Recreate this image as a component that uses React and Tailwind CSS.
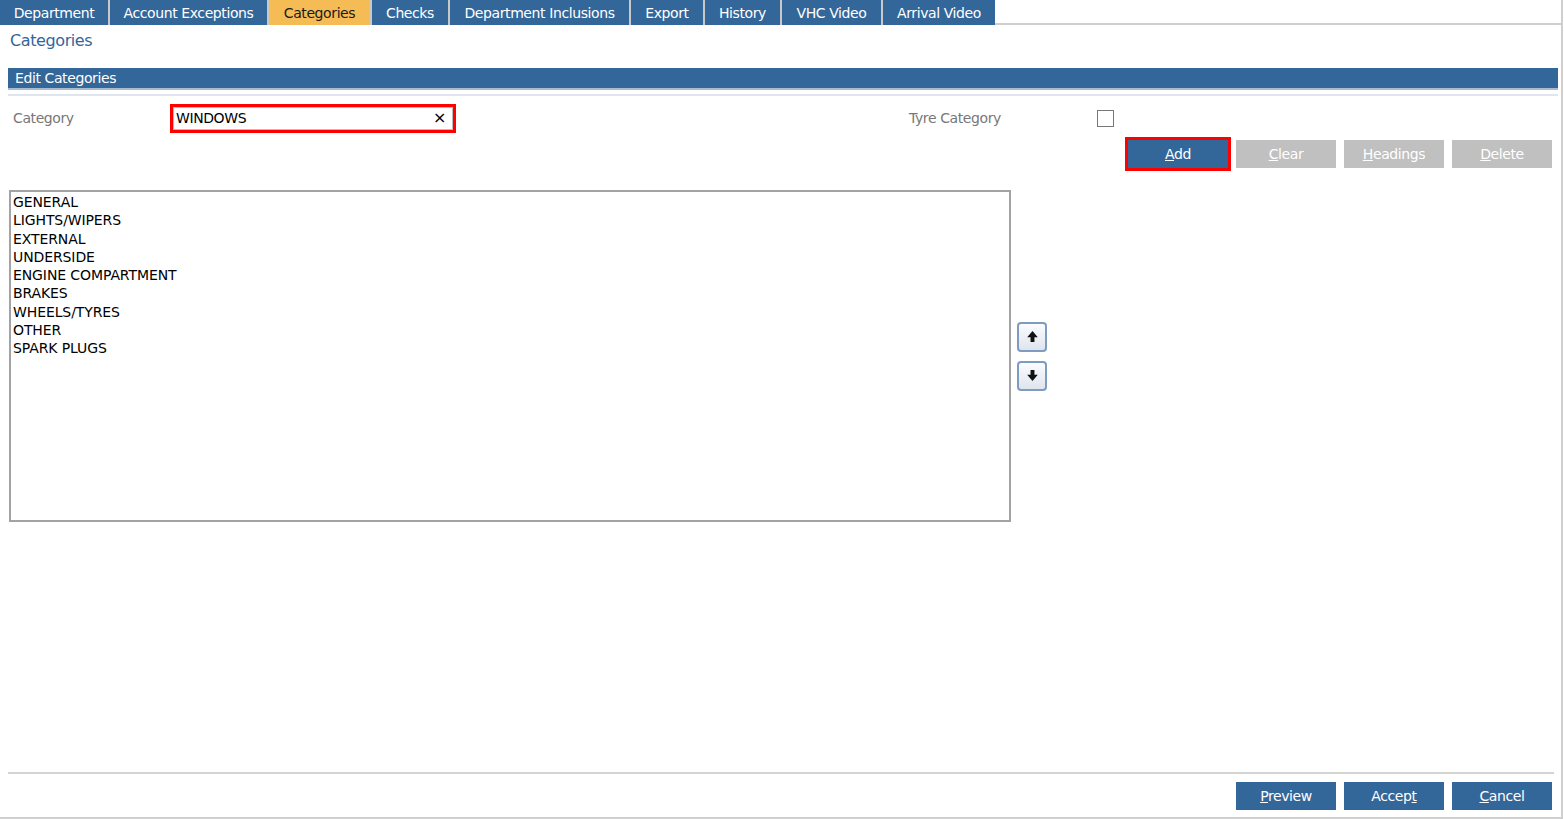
import { useState } from 'react'

const tabs = [
  { label: 'Department', w: 'w-[108px]' },
  { label: 'Account Exceptions', w: 'w-[159px]' },
  { label: 'Categories', w: 'w-[103px]', active: true },
  { label: 'Checks', w: 'w-[78px]' },
  { label: 'Department Inclusions', w: 'w-[181px]' },
  { label: 'Export', w: 'w-[74px]' },
  { label: 'History', w: 'w-[77px]' },
  { label: 'VHC Video', w: 'w-[101px]' },
  { label: 'Arrival Video', w: 'w-[114px]' },
]

const categories = [
  'GENERAL',
  'LIGHTS/WIPERS',
  'EXTERNAL',
  'UNDERSIDE',
  'ENGINE COMPARTMENT',
  'BRAKES',
  'WHEELS/TYRES',
  'OTHER',
  'SPARK PLUGS',
]

function ActionButton({ first, rest, disabled }) {
  return (
    <button
      className={`w-[100px] h-[28px] text-[14px] text-white ${disabled ? 'bg-[#c0c0c0]' : 'bg-[#336699]'}`}
    >
      <span className="underline">{first}</span>
      {rest}
    </button>
  )
}

function ArrowButton({ down }) {
  return (
    <button className="w-[30px] h-[30px] rounded-[4px] border-2 border-[#7d9cc0] bg-gradient-to-b from-[#fbfcfe] to-[#dfe4ee] flex items-center justify-center">
      <svg width="13" height="13" viewBox="0 0 12 12">
        {down ? (
          <path d="M4.2 1h3.6v4.4h3.1L6 11 1.1 5.4h3.1z" fill="#111" />
        ) : (
          <path d="M4.2 11h3.6V6.6h3.1L6 1 1.1 6.6h3.1z" fill="#111" />
        )}
      </svg>
    </button>
  )
}

function App() {
  const [category, setCategory] = useState('WINDOWS')
  const [tyre, setTyre] = useState(false)

  return (
    <div className="w-[1564px] h-[819px] bg-white font-['DejaVu_Sans',sans-serif] text-[14px] tracking-[-0.4px] flex flex-col overflow-hidden">
      {/* Tabs */}
      <div className="flex h-[25px] shrink-0">
        {tabs.map((t, i) => (
          <div
            key={t.label}
            className={`${t.w} h-[25px] pt-[2px] flex items-center justify-center text-[14px] ${i > 0 ? 'border-l-2 border-[#c8c8c8]' : ''} ${t.active ? 'bg-[#f5bb55] text-[#1a1a1a]' : 'bg-[#336699] text-white'}`}
          >
            {t.label}
          </div>
        ))}
        <div className="flex-1 border-b-2 border-r-2 border-[#cfcfcf] mr-[1px]" />
      </div>

      {/* Panel */}
      <div className="flex-1 flex flex-col border-r-2 border-b-2 border-[#cfcfcf] mr-[1px] pl-[8px] pr-[3px]">
        <div className="h-[31px] pt-[4px] pl-[2px] text-[16px] text-[#336699]">Categories</div>

        <div className="mt-[12px] h-[22px] bg-[#336699] border-b-2 border-[#a9bccf] text-white pl-[7px] flex items-center text-[14px]">
          Edit Categories
        </div>
        <div className="mt-[4px] h-[2px] bg-[#dfe6ee]" />

        {/* Form row */}
        <div className="flex items-center h-[30px] mt-[7px]">
          <div className="w-[162px] pl-[5px] text-[#777777]">Category</div>
          <div className="w-[286px] h-[29px] border-[3px] border-[#ff0000] flex items-center">
            <div className="flex-1 h-full border border-[#bdbdbd] flex items-center pl-[2px] pr-[6px]">
              <input
                value={category}
                onChange={(e) => setCategory(e.target.value)}
                className="flex-1 outline-none text-black text-[14px] bg-transparent"
              />
              <span className="text-[16px] text-black leading-none">×</span>
            </div>
          </div>
          <div className="ml-[453px] w-[188px] text-[#777777]">Tyre Category</div>
          <button
            onClick={() => setTyre(!tyre)}
            className="w-[17px] h-[17px] border border-[#777777] bg-white"
          >
            {tyre ? '✓' : ''}
          </button>
        </div>

        <div className="flex justify-end gap-[7px] mt-[4px] pr-[6px]">
          <div className="border-[3px] border-[#ff0000] mr-[-2px]">
            <button className="w-[100px] h-[28px] text-[14px] text-white bg-[#336699]">
              <span className="underline">A</span>dd
            </button>
          </div>
          <div className="flex gap-[8px] pt-[3px]">
            <ActionButton first="C" rest="lear" disabled />
            <ActionButton first="H" rest="eadings" disabled />
            <ActionButton first="D" rest="elete" disabled />
          </div>
        </div>

        {/* List + arrows */}
        <div className="flex items-center mt-[19px]">
          <div className="w-[1002px] h-[332px] ml-[1px] border-2 border-[#a3a3a3] px-[2px] pt-[1px] text-black text-[14px] tracking-[-0.1px] leading-[18.25px]">
            {categories.map((c) => (
              <div key={c}>{c}</div>
            ))}
          </div>
          <div className="ml-[6px] flex flex-col gap-[9px]">
            <ArrowButton />
            <ArrowButton down />
          </div>
        </div>

        <div className="flex-1" />

        {/* Footer */}
        <div className="h-[2px] bg-[#d4d4d4] mr-[4px]" />
        <div className="flex justify-end gap-[8px] pt-[8px] pb-[7px] pr-[6px]">
          <ActionButton first="P" rest="review" />
          <button className="w-[100px] h-[28px] text-[14px] text-white bg-[#336699]">
            Accep<span className="underline">t</span>
          </button>
          <ActionButton first="C" rest="ancel" />
        </div>
      </div>
    </div>
  )
}

export default App
